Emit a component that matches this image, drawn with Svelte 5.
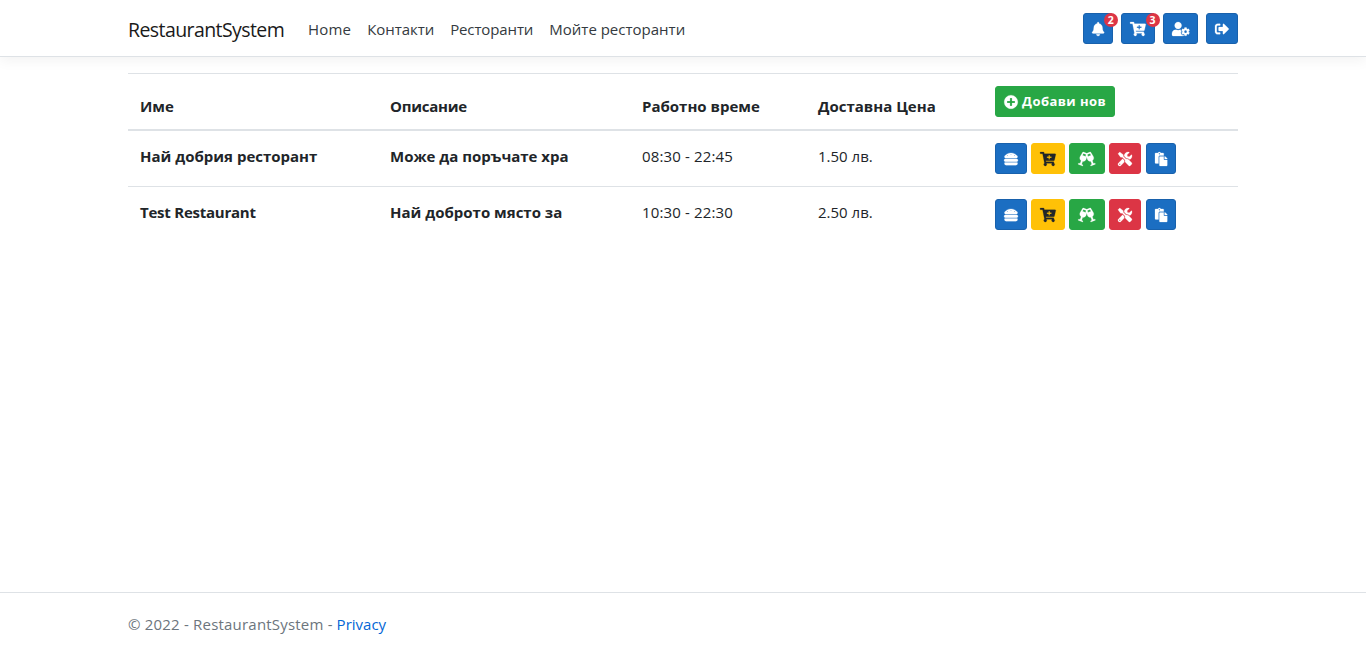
<script>
  const icons = {
    bell: [448, 'M224 512c35.32 0 63.97-28.65 63.97-64H160.03c0 35.35 28.65 64 63.97 64zm215.39-149.71c-19.32-20.76-55.47-51.99-55.47-154.29 0-77.7-54.48-139.9-127.94-155.16V32c0-17.67-14.32-32-31.98-32s-31.98 14.33-31.98 32v20.84C118.56 68.1 64.08 130.3 64.08 208c0 102.3-36.15 133.53-55.47 154.29-6 6.45-8.66 14.16-8.61 21.71.11 16.4 12.98 32 32.1 32h383.8c19.12 0 32-15.6 32.1-32 .05-7.55-2.61-15.27-8.61-21.71z'],
    cart: [576, 'M504.717 320H211.572l6.545 32h268.418c15.401 0 26.816 14.301 23.403 29.319l-5.517 24.276C523.112 414.668 536 433.828 536 456c0 31.202-25.519 56.444-56.824 55.994-29.823-.429-54.35-24.631-55.155-54.447-.44-16.287 6.085-31.049 16.803-41.548H231.176C241.553 426.165 248 440.326 248 456c0 31.813-26.528 57.431-58.67 55.938-28.54-1.325-51.751-24.385-53.251-52.917-1.158-22.034 10.436-41.455 28.051-51.586L93.883 64H24C10.745 64 0 53.255 0 40V24C0 10.745 10.745 0 24 0h102.529c11.401 0 21.228 8.021 23.513 19.19L159.208 64H551.99c15.401 0 26.816 14.301 23.403 29.319l-47.273 208C525.637 312.246 515.923 320 504.717 320zM408 168h-48v-40c0-8.837-7.163-16-16-16h-16c-8.837 0-16 7.163-16 16v40h-48c-8.837 0-16 7.163-16 16v16c0 8.837 7.163 16 16 16h48v40c0 8.837 7.163 16 16 16h16c8.837 0 16-7.163 16-16v-40h48c8.837 0 16-7.163 16-16v-16c0-8.837-7.163-16-16-16z'],
    userCog: [640, 'M610.5 373.3c2.6-14.1 2.6-28.5 0-42.6l25.8-14.9c3-1.7 4.3-5.2 3.3-8.5-6.7-21.6-18.2-41.2-33.2-57.4-2.3-2.5-6-3.1-9-1.4l-25.8 14.9c-10.9-9.3-23.4-16.5-36.9-21.3v-29.8c0-3.4-2.4-6.4-5.7-7.1-22.3-5-45-4.8-66.2 0-3.3.7-5.7 3.7-5.7 7.1v29.8c-13.5 4.8-26 12-36.9 21.3l-25.8-14.9c-2.9-1.7-6.7-1.1-9 1.4-15 16.2-26.5 35.8-33.2 57.4-1 3.3.4 6.8 3.3 8.5l25.8 14.9c-2.6 14.1-2.6 28.5 0 42.6l-25.8 14.9c-3 1.7-4.3 5.2-3.3 8.5 6.7 21.6 18.2 41.1 33.2 57.4 2.3 2.5 6 3.1 9 1.4l25.8-14.9c10.9 9.3 23.4 16.5 36.9 21.3v29.8c0 3.4 2.4 6.4 5.7 7.1 22.3 5 45 4.8 66.2 0 3.3-.7 5.7-3.7 5.7-7.1v-29.8c13.5-4.8 26-12 36.9-21.3l25.8 14.9c2.9 1.7 6.7 1.1 9-1.4 15-16.2 26.5-35.8 33.2-57.4 1-3.3-.4-6.8-3.3-8.5l-25.8-14.9zM496 400.5c-26.8 0-48.5-21.8-48.5-48.5s21.8-48.5 48.5-48.5 48.5 21.8 48.5 48.5-21.7 48.5-48.5 48.5zM224 256c70.7 0 128-57.3 128-128S294.7 0 224 0 96 57.3 96 128s57.3 128 128 128zm201.2 226.5c-2.3-1.2-4.6-2.6-6.8-3.9l-7.9 4.6c-6 3.4-12.8 5.3-19.6 5.3-10.9 0-21.4-4.6-28.9-12.6-18.3-19.8-32.3-43.9-40.2-69.6-5.5-17.7 1.9-36.4 17.9-45.7l7.9-4.6c-.1-2.6-.1-5.2 0-7.8l-7.9-4.6c-16-9.2-23.4-28-17.9-45.7.9-2.9 2.2-5.8 3.2-8.7-3.8-.3-7.5-1.2-11.4-1.2h-16.7c-22.2 10.2-46.9 16-72.9 16s-50.6-5.8-72.9-16h-16.7C60.2 288 0 348.2 0 422.4V464c0 26.5 21.5 48 48 48h352c10.1 0 19.5-3.2 27.2-8.5-1.2-3.8-2-7.7-2-11.8v-9.2z'],
    signOut: [512, 'M497 273L329 441c-15 15-41 4.5-41-17v-96H152c-13.3 0-24-10.7-24-24v-96c0-13.3 10.7-24 24-24h136V88c0-21.4 25.9-32 41-17l168 168c9.3 9.4 9.3 24.6 0 34zM192 436v-40c0-6.6-5.4-12-12-12H96c-17.7 0-32-14.3-32-32V160c0-17.7 14.3-32 32-32h84c6.6 0 12-5.4 12-12V76c0-6.6-5.4-12-12-12H96c-53 0-96 43-96 96v192c0 53 43 96 96 96h84c6.6 0 12-5.4 12-12z'],
    plus: [512, 'M256 8C119 8 8 119 8 256s111 248 248 248 248-111 248-248S393 8 256 8zm144 276c0 6.6-5.4 12-12 12h-92v92c0 6.6-5.4 12-12 12h-56c-6.6 0-12-5.4-12-12v-92h-92c-6.6 0-12-5.4-12-12v-56c0-6.6 5.4-12 12-12h92v-92c0-6.6 5.4-12 12-12h56c6.6 0 12 5.4 12 12v92h92c6.6 0 12 5.4 12 12v56z'],
    burger: [512, 'M464 256H48a48 48 0 0 0 0 96h416a48 48 0 0 0 0-96zm16 128H32a16 16 0 0 0-16 16v16a64 64 0 0 0 64 64h352a64 64 0 0 0 64-64v-16a16 16 0 0 0-16-16zM58.64 224h394.72c34.57 0 54.62-43.9 34.82-75.88C448 83.2 359.55 32.1 256 32c-103.54.1-192 51.2-232.18 116.11C4 180.09 24.07 224 58.64 224zM384 112a16 16 0 1 1-16 16 16 16 0 0 1 16-16zM256 80a16 16 0 1 1-16 16 16 16 0 0 1 16-16zm-128 32a16 16 0 1 1-16 16 16 16 0 0 1 16-16z'],
    cheers: [640, 'M639.4 433.6c-8.4-20.4-31.8-30.1-52.2-21.6l-22.1 9.2-38.7-101.9c47.9-35 64.8-100.3 34.5-152.8L474.3 16c-8-13.9-25.1-19.7-40-13.6L320 49.8 205.7 2.4c-14.9-6.2-32-.3-40 13.6L79.1 166.5C48.9 219 65.7 284.3 113.6 319.2L74.9 421.1l-22.1-9.2c-20.4-8.5-43.7 1.2-52.2 21.6-1.7 4.1.2 8.8 4.3 10.5l162.3 67.4c4.1 1.7 8.7-.2 10.4-4.3 8.4-20.4-1.2-43.8-21.6-52.3l-22.1-9.2L173.3 342c4.4.5 8.8 1.3 13.1 1.3 51.7 0 99.4-33.1 113.4-85.3l20.2-75.4 20.2 75.4c14 52.2 61.7 85.3 113.4 85.3 4.3 0 8.7-.8 13.1-1.3L506 445.6l-22.1 9.2c-20.4 8.5-30 31.9-21.6 52.3 1.7 4.1 6.4 6 10.4 4.3L635.1 444c4.1-1.7 6-6.3 4.3-10.4zM275.9 162.1l-112.1-46.5 36.5-63.4 94.5 39.2-18.9 70.7zm88.2 0l-18.9-70.7 94.5-39.2 36.5 63.4-112.1 46.5z'],
    tools: [512, 'M501.1 395.7L384 278.6c-23.1-23.1-57.6-27.6-85.4-13.9L192 158.1V96L64 0 0 64l96 128h62.1l106.6 106.6c-13.6 27.8-9.2 62.3 13.9 85.4l117.1 117.1c14.6 14.6 38.2 14.6 52.7 0l52.7-52.7c14.5-14.6 14.5-38.2 0-52.7zM331.7 225c28.3 0 54.9 11 74.9 31l19.4 19.4c15.8-6.9 30.8-16.5 43.8-29.5 37.1-37.1 49.7-89.3 37.9-136.7-2.2-9-13.5-12.1-20.1-5.5l-74.4 74.4-67.9-11.3L334 98.9l74.4-74.4c6.6-6.6 3.4-17.9-5.7-20.2-47.4-11.7-99.6.9-136.6 37.9-28.5 28.5-41.9 66.1-41.2 103.6l82.1 82.1c8.1-1.9 16.5-2.9 24.7-2.9zm-103.9 82l-56.7-56.7L18.7 402.8c-25 25-25 65.5 0 90.5s65.5 25 90.5 0l123.6-123.6c-7.6-19.9-9.9-41.6-5-62.7zM64 472c-13.2 0-24-10.8-24-24 0-13.3 10.7-24 24-24s24 10.7 24 24c0 13.2-10.7 24-24 24z'],
    paste: [448, 'M128 184c0-30.879 25.122-56 56-56h136V56c0-13.255-10.745-24-24-24h-80.61C204.306 12.89 183.637 0 160 0s-44.306 12.89-55.39 32H24C10.745 32 0 42.745 0 56v336c0 13.255 10.745 24 24 24h104V184zm32-144c13.255 0 24 10.745 24 24s-10.745 24-24 24-24-10.745-24-24 10.745-24 24-24zm184 248h104v200c0 13.255-10.745 24-24 24H184c-13.255 0-24-10.745-24-24V184c0-13.255 10.745-24 24-24h136v104c0 13.2 10.8 24 24 24zm104-38.059V256h-96v-96h6.059a24 24 0 0 1 16.97 7.029l65.941 65.941a24 24 0 0 1 7.03 16.971z']
  };

  const links = ['Home', 'Контакти', 'Ресторанти', 'Мойте ресторанти'];
  const tools = [
    { icon: 'bell', badge: 2 },
    { icon: 'cart', badge: 3 },
    { icon: 'userCog' },
    { icon: 'signOut' }
  ];
  const rows = [
    { name: 'Най добрия ресторант', text: 'Може да поръчате хра', hours: '08:30 - 22:45', price: '1.50 лв.' },
    { name: 'Test Restaurant', text: 'Най доброто място за', hours: '10:30 - 22:30', price: '2.50 лв.', latin: true }
  ];
  const actions = [
    ['burger', 'primary'],
    ['cart', 'warning'],
    ['cheers', 'success'],
    ['tools', 'danger'],
    ['paste', 'primary']
  ];
</script>

{#snippet icon(name)}
  <svg class="icon" viewBox="0 0 {icons[name][0]} 512" width={(icons[name][0] / 512) * 14} height="14" aria-hidden="true">
    <path d={icons[name][1]} />
  </svg>
{/snippet}

<div class="page">
  <header>
    <div class="container bar">
      <a class="brand" href="#home">RestaurantSystem</a>
      <nav>
        {#each links as link}<a href="#nav">{link}</a>{/each}
      </nav>
      <div class="tools">
        {#each tools as tool}
          <button class="btn primary">
            {@render icon(tool.icon)}
            {#if tool.badge}<span class="badge">{tool.badge}</span>{/if}
          </button>
        {/each}
      </div>
    </div>
  </header>

  <main class="container">
    <table>
      <colgroup><col class="c1" /><col class="c2" /><col class="c3" /><col class="c4" /><col /></colgroup>
      <thead>
        <tr>
          <th>Име</th>
          <th class="tight">Описание</th>
          <th>Работно време</th>
          <th>Доставна Цена</th>
          <th class="last"><button class="btn success add">{@render icon('plus')}<span>Добави нов</span></button></th>
        </tr>
      </thead>
      <tbody>
        {#each rows as row}
          <tr>
            <th class:tight={row.latin}>{row.name}</th>
            <th>{row.text}</th>
            <td class="hours">{row.hours}</td>
            <td>{row.price}</td>
            <td class="last">
              <div class="actions">
                {#each actions as [name, kind]}
                  <button class="btn {kind}">{@render icon(name)}</button>
                {/each}
              </div>
            </td>
          </tr>
        {/each}
      </tbody>
    </table>
  </main>

  <footer>
    <div class="container"><span class="copy">© 2022 - RestaurantSystem -</span> <a href="#privacy">Privacy</a></div>
  </footer>
</div>

<style>
  :global(body) { margin: 0; background: #fff; }
  .page {
    display: flex;
    flex-direction: column;
    height: 653px;
    overflow: hidden;
    font: 400 15px/24px "Open Sans", "Noto Sans", sans-serif;
    color: #212529;
  }
  .page * { box-sizing: border-box; }
  a { text-decoration: none; color: inherit; }
  .container { width: 1110px; margin: 0 auto; }
  header {
    height: 57px;
    flex: none;
    border-bottom: 1px solid #dee2e6;
    box-shadow: 0 4px 12px rgba(0, 0, 0, 0.05);
  }
  .bar { display: flex; align-items: center; height: 56px; }
  .brand { font-size: 19.5px; letter-spacing: -0.58px; line-height: 30px; margin-right: 24px; width: 156px; white-space: nowrap; color: #1a1a1a; padding-top: 4px; }
  nav { display: flex; gap: 16px; color: #343a40; padding-top: 2px; }
  nav a:first-child { letter-spacing: 0.2px; }
  nav a:nth-child(2) { letter-spacing: -0.06px; }
  nav a:nth-child(3) { letter-spacing: -0.12px; }
  .tools { display: flex; gap: 8px; margin-left: auto; }
  .btn {
    position: relative;
    display: inline-flex;
    align-items: center;
    justify-content: center;
    height: 31px;
    padding: 1px 8px 0;
    border: 1px solid;
    border-radius: 3px;
    font: 400 14px/21px "Open Sans", sans-serif;
    color: #fff;
  }
  .icon { display: block; flex: none; overflow: visible; fill: currentColor; stroke: currentColor; stroke-width: 8; }
  .primary { background: #1b6ec2; border-color: #1861ac; }
  .success { background: #28a745; border-color: #28a745; }
  .warning { background: #ffc107; border-color: #ffc107; color: #212529; }
  .danger { background: #dc3545; border-color: #dc3545; }
  .badge {
    position: absolute;
    top: -1px;
    right: -6px;
    width: 14px;
    height: 14px;
    border-radius: 50%;
    background: #dc3545;
    font-size: 10.5px;
    line-height: 14px;
    font-weight: 700;
    text-align: center;
  }
  main { flex: 1; padding-top: 16px; }
  table { width: 1110px; table-layout: fixed; border-collapse: collapse; }
  .c1 { width: 250px; }
  .c2 { width: 252px; }
  .c3 { width: 176px; }
  .c4 { width: 177px; }
  th, td { padding: 13px 12px 11px; border-top: 1px solid #dee2e6; text-align: left; vertical-align: top; white-space: nowrap; }
  th { font-weight: 700; }
  thead th { vertical-align: bottom; border-bottom: 2px solid #dee2e6; }
  th.last, td.last { padding: 12px; }
  .tight { letter-spacing: -0.24px; }
  .hours { letter-spacing: 0.15px; }
  .add { width: 120px; justify-content: flex-start; gap: 4px; padding-top: 0; font-size: 13px; font-weight: 700; letter-spacing: 0.45px; vertical-align: top; }
  .actions { display: flex; gap: 4.2px; }
  .actions .btn:last-child { margin-left: 0.6px; }
  footer { height: 61px; flex: none; border-top: 1px solid #dee2e6; line-height: 62px; color: #6c757d; }
  .copy { letter-spacing: 0.2px; }
  footer a { color: #0366d6; }
</style>
